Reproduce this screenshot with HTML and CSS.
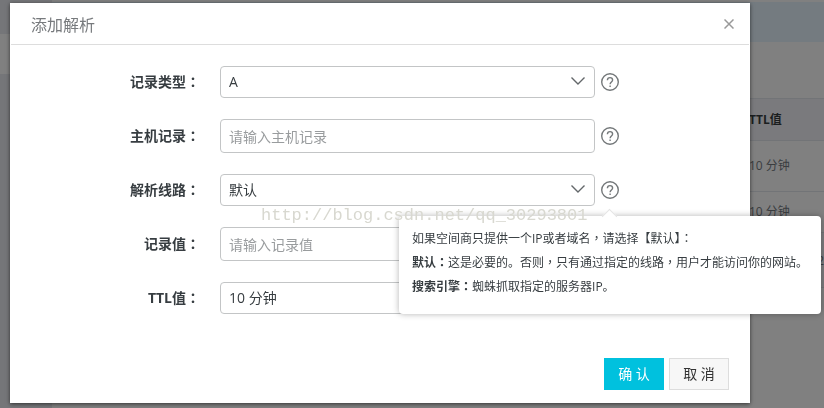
FILE: index.html
```html
<!DOCTYPE html>
<html lang="zh-CN">
<head>
<meta charset="UTF-8">
<meta name="viewport" content="width=device-width, initial-scale=1.0">
<title>添加解析</title>
<link rel="stylesheet" href="styles.css">
</head>
<body>
<div class="page">
    <div class="sidebar">
        <div class="sidebar-active"></div>
    </div>
    <div class="content">
        <div class="notice"></div>
        <table class="records">
            <thead>
                <tr><th>TTL值</th></tr>
            </thead>
            <tbody>
                <tr><td>10 分钟</td></tr>
                <tr class="short"><td>10 分钟</td></tr>
                <tr class="footer"><td class="count">2</td></tr>
            </tbody>
        </table>
    </div>
</div>

<div class="overlay">
    <form class="modal">
        <div class="modal-header">
            <h1>添加解析</h1>
            <button type="button" class="close" aria-label="关闭">
                <svg width="10" height="10" viewBox="0 0 10 10"><path d="M0.5 0.5l9 9M9.5 0.5l-9 9"/></svg>
            </button>
        </div>
        <div class="modal-body">
            <div class="row">
                <label for="type">记录类型<span class="colon" lang="zh-TW">：</span></label>
                <div class="select">
                    <select id="type"><option>A</option><option>CNAME</option></select>
                    <svg width="14" height="8" viewBox="0 0 14 8"><path d="M0.5 0.5L7 7l6.500-6.500"/></svg>
                </div>
                <button type="button" class="help" aria-label="帮助">
                    <svg width="18" height="18" viewBox="0 0 18 18"><circle cx="9" cy="9" r="8.300"/><path d="M6.400 7.300C6.400 5.600 7.500 4.600 9 4.600s2.600 1 2.600 2.400c0 1.900-2.500 2-2.500 4.200"/><path d="M9.100 12.600v1.400"/></svg>
                </button>
            </div>
            <div class="row">
                <label for="host">主机记录<span class="colon" lang="zh-TW">：</span></label>
                <input type="text" id="host" placeholder="请输入主机记录">
                <button type="button" class="help" aria-label="帮助">
                    <svg width="18" height="18" viewBox="0 0 18 18"><circle cx="9" cy="9" r="8.300"/><path d="M6.400 7.300C6.400 5.600 7.500 4.600 9 4.600s2.600 1 2.600 2.400c0 1.900-2.500 2-2.500 4.200"/><path d="M9.100 12.600v1.400"/></svg>
                </button>
            </div>
            <div class="row">
                <label for="line">解析线路<span class="colon" lang="zh-TW">：</span></label>
                <div class="select">
                    <select id="line"><option>默认</option><option>搜索引擎</option></select>
                    <svg width="14" height="8" viewBox="0 0 14 8"><path d="M0.5 0.5L7 7l6.500-6.500"/></svg>
                </div>
                <div class="help-wrap">
                    <button type="button" class="help" aria-label="帮助" aria-describedby="line-tip">
                        <svg width="18" height="18" viewBox="0 0 18 18"><circle cx="9" cy="9" r="8.300"/><path d="M6.400 7.300C6.400 5.600 7.500 4.600 9 4.600s2.600 1 2.600 2.400c0 1.900-2.500 2-2.500 4.200"/><path d="M9.100 12.600v1.400"/></svg>
                    </button>
                    <div class="tooltip" id="line-tip" role="tooltip">
                        <p>如果空间商只提供一个IP或者域名<span class="colon" lang="zh-TW">，</span>请选择【默认】<span class="colon" lang="zh-TW">：</span></p>
                        <p><b>默认<span class="colon" lang="zh-TW">：</span></b>这是必要的。否则<span class="colon" lang="zh-TW">，</span>只有通过指定的线路<span class="colon" lang="zh-TW">，</span>用户才能访问你的网站。</p>
                        <p><b>搜索引擎<span class="colon" lang="zh-TW">：</span></b>蜘蛛抓取指定的服务器IP。</p>
                    </div>
                </div>
            </div>
            <div class="row">
                <label for="value">记录值<span class="colon" lang="zh-TW">：</span></label>
                <input type="text" id="value" placeholder="请输入记录值">
            </div>
            <div class="row">
                <label for="ttl">TTL值<span class="colon" lang="zh-TW">：</span></label>
                <div class="select">
                    <select id="ttl"><option>10 分钟</option></select>
                    <svg width="14" height="8" viewBox="0 0 14 8"><path d="M0.5 0.5L7 7l6.500-6.500"/></svg>
                </div>
            </div>
        </div>
        <div class="modal-footer">
            <button type="button" class="btn primary">确 认</button>
            <button type="button" class="btn">取 消</button>
        </div>
        <div class="watermark">http://blog.csdn.net/qq_30293801</div>
    </form>
</div>
</body>
</html>
```
FILE: styles.css
```css
* {
    box-sizing: border-box;
}
body {
    margin: 0;
    font-family: "Open Sans", "Noto Sans CJK SC", sans-serif;
    font-size: 14px;
    color: #373d41;
    background-color: #808080;
    overflow: hidden;
}
h1, p {
    margin: 0;
}
button {
    font-family: inherit;
    cursor: pointer;
}
svg {
    display: block;
    fill: none;
}
/* the TC face centres full-width punctuation */
.colon {
    font-family: "Noto Sans CJK TC", sans-serif;
    line-height: 1;
}

/* page behind the dialog */
.page {
    display: flex;
    min-height: 100vh;
}
.sidebar {
    width: 52px;
    padding-top: 34px;
    background-color: #757679;
}
.sidebar-active {
    height: 40px;
    background-color: #808080;
}
.content {
    flex: 1;
    padding-top: 2px;
}
.notice {
    height: 40px;
    margin-bottom: 56px;
    background-color: #747b80;
}
.records {
    width: 100%;
    border-collapse: collapse;
    font-size: 12px;
}
.records th,
.records td {
    height: 51px;
    padding: 0 0 2px 697px;
    text-align: left;
    color: #3a3d40;
    border-bottom: 1px solid #727477;
}
.records th {
    height: 42px;
    color: #1b1e20;
    background-color: #7a7a7d;
    border-top: 1px solid #727477;
}
.records .short td {
    height: 41px;
}
.records .footer td {
    height: 55px;
    background-color: #7c7c7e;
}
.records .count {
    padding: 0;
    text-align: right;
}

/* dialog */
.overlay {
    position: fixed;
    inset: 0;
    padding: 3px 74px 5px 10px;
}
.modal {
    position: relative;
    background-color: #fff;
    box-shadow: 0 1px 4px rgba(0, 0, 0, 0.6);
}
.modal-header {
    display: flex;
    justify-content: space-between;
    align-items: center;
    height: 42px;
    margin: 0 1px;
    padding: 0 15px 0 20px;
    border-bottom: 1px solid #ddd;
}
.modal-header h1 {
    font-size: 16px;
    font-weight: normal;
    color: #777a7d;
}
.close {
    padding: 0;
    border: 0;
    background: none;
}
.close svg {
    stroke: #999;
    stroke-width: 1.5;
}
.modal-body {
    display: flex;
    flex-direction: column;
    gap: 20px;
    padding: 20px 129px 43px 20px;
}
.row {
    display: flex;
    align-items: center;
    height: 34px;
}
.row label {
    width: 170px;
    margin-right: 20px;
    padding-bottom: 2px;
    text-align: right;
    font-weight: bold;
}
.select,
.row input {
    flex: none;
    width: 375px;
}
.select {
    position: relative;
}
.select select,
.row input {
    height: 32px;
    padding: 0 8px;
    font-family: inherit;
    font-size: 14px;
    color: #373d41;
    background-color: #fff;
    border: 1px solid #c3c5c6;
    border-radius: 4px;
}
.select select {
    display: block;
    width: 100%;
    padding-bottom: 2px;
    appearance: none;
}
.row input {
    height: 34px;
}
.row input::placeholder {
    color: #999c9e;
}
.select svg {
    position: absolute;
    right: 10px;
    top: 11px;
    stroke: #63676a;
    stroke-width: 1.4;
    pointer-events: none;
}
.help {
    display: block;
    margin-left: 6px;
    padding: 0;
    border: 0;
    background: none;
}
.help svg {
    stroke: #74787a;
    stroke-width: 1.4;
}
.help-wrap {
    position: relative;
}
.tooltip {
    position: absolute;
    z-index: 2;
    top: 35px;
    right: -202px;
    width: 422px;
    height: 98px;
    padding: 11px 13px;
    font-size: 12px;
    line-height: 24px;
    white-space: nowrap;
    background-color: #fff;
    border-radius: 4px;
    box-shadow: 0 0 6px rgba(0, 0, 0, 0.3);
}
.tooltip::before {
    content: "";
    position: absolute;
    top: -5px;
    left: 205px;
    width: 10px;
    height: 10px;
    background-color: #fff;
    border: 1px solid #e4e4e4;
    border-width: 1px 0 0 1px;
    transform: rotate(45deg);
}
.modal-footer {
    display: flex;
    justify-content: flex-end;
    gap: 5px;
    padding: 0 21px 13px;
}
.btn {
    width: 60px;
    height: 32px;
    padding: 0 0 2px;
    font-size: 14px;
    color: #333;
    background-color: #f7f7f7;
    border: 1px solid #ddd;
}
.btn.primary {
    color: #fff;
    background-color: #00c1de;
    border-color: #00c1de;
}
.watermark {
    position: absolute;
    z-index: 3;
    top: 203px;
    left: 251px;
    font-family: "Liberation Mono", monospace;
    font-size: 17px;
    line-height: 20px;
    color: #d8d8d0;
    pointer-events: none;
}
```
